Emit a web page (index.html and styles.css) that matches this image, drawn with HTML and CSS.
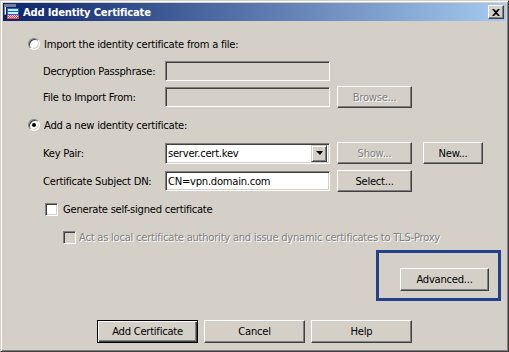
FILE: index.html
```html
<!DOCTYPE html>
<html lang="en">
<head>
  <meta charset="UTF-8" />
  <title>Add Identity Certificate</title>
  <link rel="stylesheet" href="styles.css">
</head>
<body>
  <div class="window">
    <div class="titlebar">
      <svg class="app-icon" width="16" height="16" viewBox="0 0 16 16">
        <rect x="0.5" y="0.5" width="11" height="10" fill="#f0f0f0" stroke="#808080"/>
        <rect x="1" y="1" width="10" height="2" fill="#6a7fb8"/>
        <rect x="2.5" y="3.5" width="13" height="12" fill="#2a5bd0" stroke="#0a246a"/>
        <rect x="4" y="5" width="10" height="2" fill="#b8f8f8"/>
        <rect x="4" y="8" width="10" height="2" fill="#b8f8f8"/>
        <rect x="3" y="11" width="12" height="4" fill="#e84848"/>
        <path d="M4 11h1v1h-1zM6 11h1v1h-1zM8 11h1v1h-1zM10 11h1v1h-1zM12 11h1v1h-1zM5 12h1v1h-1zM7 12h1v1h-1zM9 12h1v1h-1zM11 12h1v1h-1zM13 12h1v1h-1zM4 13h1v1h-1zM6 13h1v1h-1zM8 13h1v1h-1zM10 13h1v1h-1zM12 13h1v1h-1z" fill="#ffc8c8"/>
      </svg>
      <span class="title">Add Identity Certificate</span>
      <div class="close-btn">
        <svg width="8" height="7" viewBox="0 0 8 7">
          <path d="M0 0h2l2 2 2-2h2l-3 3.5 3 3.5h-2l-2-2-2 2h-2l3-3.5z" fill="#000"/>
        </svg>
      </div>
    </div>

    <div class="content">
      <div class="row">
        <span class="radio"></span>
        <span class="opt-text">Import the identity certificate from a file:</span>
      </div>
      <div class="row row-b">
        <span class="label">Decryption Passphrase:</span>
        <span class="field disabled"></span>
      </div>
      <div class="row row-c">
        <span class="label">File to Import From:</span>
        <span class="field disabled"></span>
        <span class="btn off gap-btn">Browse...</span>
      </div>
      <div class="row spaced">
        <span class="radio checked"></span>
        <span class="opt-text">Add a new identity certificate:</span>
      </div>
      <div class="row spaced">
        <span class="label">Key Pair:</span>
        <span class="field combo">
          <span class="field-text">server.cert.kev</span>
          <span class="drop-btn"><span class="arrow"></span></span>
        </span>
        <span class="btn off gap-btn">Show...</span>
        <span class="btn new-btn">New...</span>
      </div>
      <div class="row spaced">
        <span class="label">Certificate Subject DN:</span>
        <span class="field"><span class="field-text">CN=vpn.domain.com</span></span>
        <span class="btn gap-btn">Select...</span>
      </div>
      <div class="row spaced check-row">
        <span class="check"></span>
        <span class="check-text">Generate self-signed certificate</span>
      </div>
      <div class="row spaced sub-check-row">
        <span class="check disabled"></span>
        <span class="check-text off-text">Act as local certificate authority and issue dynamic certificates to TLS-Proxy</span>
      </div>
      <div class="advanced-box">
        <span class="btn advanced-btn">Advanced...</span>
      </div>
    </div>

    <div class="footer">
      <span class="btn foot-btn default">Add Certificate</span>
      <span class="btn foot-btn">Cancel</span>
      <span class="btn foot-btn">Help</span>
    </div>
  </div>
</body>
</html>
```

FILE: styles.css
```css
* { box-sizing: border-box; }

body {
  margin: 0;
  font-family: 'DejaVu Sans', Verdana, sans-serif;
  font-size: 10px;
  letter-spacing: -0.25px;
  color: #000;
  background: #d4d0c8;
}

.window {
  width: 509px;
  height: 352px;
  background: #d4d0c8;
  border: 1px solid;
  border-color: #d4d0c8 #404040 #404040 #d4d0c8;
  box-shadow: inset 1px 1px #fff, inset -1px -1px #808080;
  padding: 2px;
  white-space: nowrap;
}

.titlebar {
  height: 18px;
  display: flex;
  align-items: center;
  padding-left: 1px;
  padding-right: 2px;
  background: linear-gradient(to right, #0a246a, #a6caf0);
}

.app-icon { flex-shrink: 0; }

.title {
  margin-left: 3px;
  color: #fff;
  font-weight: bold;
  font-size: 10px;
  letter-spacing: -0.2px;
  flex: 1;
}

.close-btn {
  width: 16px;
  height: 14px;
  background: #d4d0c8;
  border: 1px solid;
  border-color: #fff #404040 #404040 #fff;
  box-shadow: inset -1px -1px #808080;
  display: flex;
  align-items: center;
  justify-content: center;
  padding-right: 1px;
}

.content {
  padding: 12px 0 0 25px;
}

.row {
  display: flex;
  align-items: center;
  height: 22px;
}

.row-b { margin-top: 5px; }
.row-c { margin-top: 4px; }
.spaced { margin-top: 6px; }

.radio {
  width: 12px;
  height: 12px;
  border-radius: 50%;
  background: #fff;
  border: 1px solid;
  border-color: #808080 #fff #fff #808080;
  box-shadow: inset 1px 1px #404040, inset -1px -1px #d4d0c8;
  position: relative;
  flex-shrink: 0;
}

.radio.checked::after {
  content: "";
  position: absolute;
  left: 3px;
  top: 3px;
  width: 4px;
  height: 4px;
  border-radius: 50%;
  background: #000;
}

.opt-text { margin-left: 4px; }

.label {
  width: 137px;
  padding-left: 15px;
  flex-shrink: 0;
}

.field {
  width: 165px;
  height: 20px;
  background: #fff;
  border: 1px solid;
  border-color: #808080 #fff #fff #808080;
  box-shadow: inset 1px 1px #404040, inset -1px -1px #d4d0c8;
  display: flex;
  align-items: center;
  flex-shrink: 0;
}

.field.disabled { background: #d4d0c8; }

.field-text {
  padding-left: 2px;
  flex: 1;
}

.combo {
  height: 21px;
  padding: 2px;
}

.combo .field-text { padding-left: 0; }

.drop-btn {
  width: 16px;
  height: 17px;
  background: #d4d0c8;
  border: 1px solid;
  border-color: #d4d0c8 #404040 #404040 #d4d0c8;
  box-shadow: inset 1px 1px #fff, inset -1px -1px #808080;
  display: flex;
  align-items: center;
  justify-content: center;
}

.arrow {
  width: 0;
  height: 0;
  border-left: 4px solid transparent;
  border-right: 3px solid transparent;
  border-top: 4px solid #000;
}

.btn {
  height: 22px;
  background: #d4d0c8;
  border: 1px solid;
  border-color: #fff #404040 #404040 #fff;
  box-shadow: inset -1px -1px #808080;
  display: flex;
  align-items: center;
  justify-content: center;
  flex-shrink: 0;
}

.btn.off {
  color: #808080;
  text-shadow: 1px 1px #fff;
}

.gap-btn {
  width: 75px;
  margin-left: 7px;
}

.new-btn {
  width: 60px;
  margin-left: 11px;
}

.check {
  width: 13px;
  height: 13px;
  background: #fff;
  border: 1px solid;
  border-color: #808080 #fff #fff #808080;
  box-shadow: inset 1px 1px #404040, inset -1px -1px #d4d0c8;
  flex-shrink: 0;
}

.check.disabled { background: #d4d0c8; }

.check-row { padding-left: 17px; }
.check-row .check-text { margin-left: 5px; }

.sub-check-row { padding-left: 35px; }
.sub-check-row .check-text { margin-left: 3px; }

.off-text {
  color: #808080;
  text-shadow: 1px 1px #fff;
}

.advanced-box {
  margin: 2px 0 0 348px;
  width: 125px;
  height: 51px;
  border: 3px solid #24428c;
  padding: 15px 0 0 21px;
}

.advanced-btn {
  width: 89px;
  height: 23px;
}

.footer {
  display: flex;
  justify-content: center;
  gap: 6px;
  margin-top: 19px;
}

.foot-btn {
  width: 101px;
  height: 23px;
}

.foot-btn.default {
  border-color: #000;
  box-shadow: inset 1px 1px #fff, inset -1px -1px #404040, inset -2px -2px #808080;
}
```
